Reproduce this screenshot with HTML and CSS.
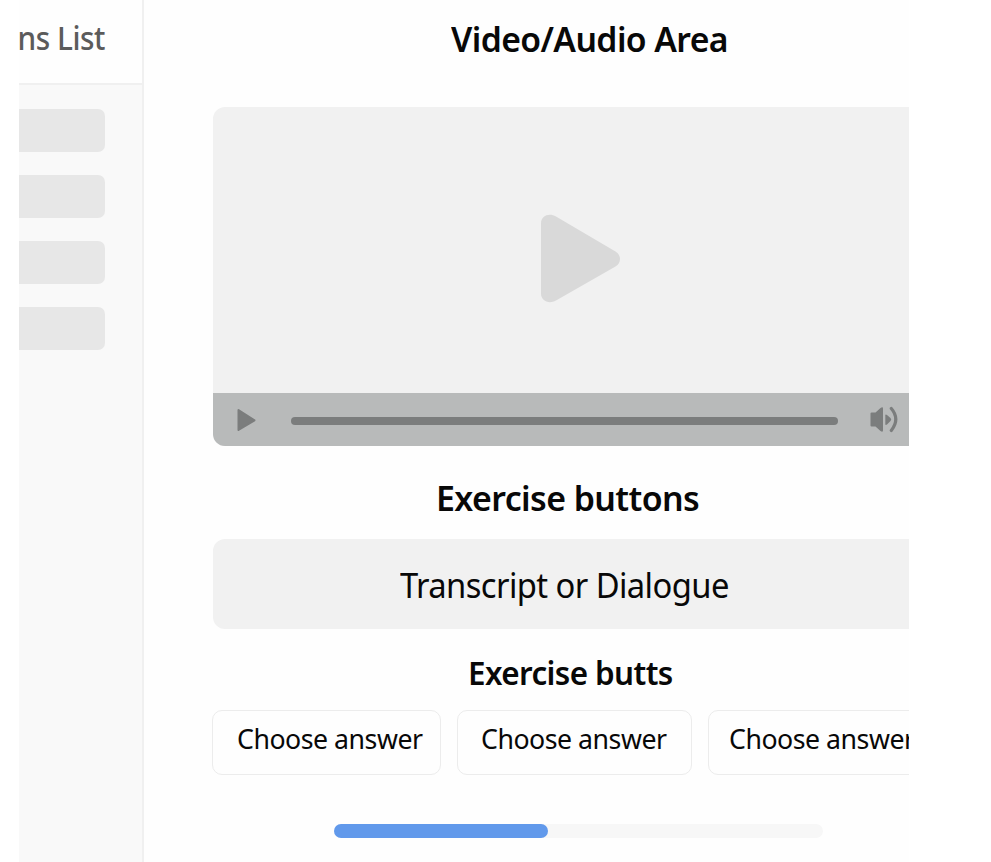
FILE: index.html
```html
<!DOCTYPE html>
<html lang="en">
<head>
<meta charset="utf-8">
<title>Lesson</title>
<link rel="stylesheet" href="styles.css">
</head>
<body>
<div class="frame">
  <aside class="sidebar">
    <div class="sidebar-header"><span class="sidebar-title">ns List</span></div>
    <div class="lessons">
      <div class="lesson"></div>
      <div class="lesson"></div>
      <div class="lesson"></div>
      <div class="lesson"></div>
    </div>
  </aside>
  <main class="main">
    <h1 class="heading heading-video"><span>Video/Audio Area</span></h1>
    <section class="player">
      <div class="screen">
        <svg class="big-play" width="80" height="90" viewBox="0 0 80 90"><path d="M0 9.500C0 2 8 -1.500 15 2.500L74.500 37.500C80.500 41 80.500 49 74.500 52.500L15 86.500C8 90.500 0 87 0 79.500Z" fill="#d9d9d9"/></svg>
      </div>
      <div class="controls">
        <svg class="play" width="20" height="24" viewBox="0 0 20 24"><path d="M1.500 2L17.500 12.300L1.500 22Z" fill="#7b7d7d" stroke="#7b7d7d" stroke-width="2" stroke-linejoin="round"/></svg>
        <div class="track"></div>
        <svg class="volume" width="28" height="28" viewBox="0 0 28 28" fill="#7b7d7d"><path d="M0.500 7.500Q0.500 6.500 1.500 6.500H5.500L10.500 2Q13 0.500 13 2.500V24.500Q13 26.500 10.500 25L5.500 20.500H1.500Q0.500 20.500 0.500 19.500Z"/><path d="M15.300 9.500Q15.300 8 17 9L20.500 12Q22 13.300 20.500 15L17 18.500Q15.300 19.500 15.300 18Z"/><path d="M21.300 2.500Q30.300 13 21.300 24.500" fill="none" stroke="#7b7d7d" stroke-width="3.200" stroke-linecap="round"/></svg>
      </div>
    </section>
    <h2 class="heading heading-exercise"><span>Exercise buttons</span></h2>
    <section class="transcript"><span>Transcript or Dialogue</span></section>
    <h2 class="heading heading-butts"><span>Exercise butts</span></h2>
    <div class="answers">
      <button class="answer answer-first"><span>Choose answer</span></button>
      <button class="answer answer-second"><span>Choose answer</span></button>
      <button class="answer answer-third"><span>Choose answer</span></button>
    </div>
    <div class="progress"><div class="progress-fill"></div></div>
  </main>
</div>
</body>
</html>
```
FILE: styles.css
```css
* { box-sizing: border-box; }
body { margin: 0; background: #fff; color: #080808; font-family: "Noto Sans", sans-serif; }
.frame { display: flex; width: 890px; height: 862px; margin-left: 19px; overflow: hidden; background: #fefefe; white-space: nowrap; }
.sidebar { flex: none; width: 125px; background: #f9f9f9; border-right: 2px solid #f0f0f0; }
.sidebar-header { display: flex; justify-content: flex-end; height: 85px; padding: 17px 37.500px 0 0; background: #fefefe; border-bottom: 2px solid #f0f0f0; }
.sidebar-title { font-size: 32px; font-weight: 500; line-height: 42px; color: #5b5b5b; letter-spacing: -0.5px; transform: scaleX(.93); transform-origin: right; }
.lessons { display: grid; gap: 23px; padding: 24.400px 37px 0 0; }
.lesson { height: 43px; border-radius: 0 7px 7px 0; background: #e7e7e7; }
.main { flex: 1; min-width: 0; padding-left: 68.500px; }
.heading { margin: 0; font-size: 34px; font-weight: 600; line-height: 46px; letter-spacing: -0.6px; }
.heading span, .transcript span, .answer span { display: inline-block; transform-origin: left; }
.heading-video { height: 106.500px; padding: 16px 0 0 238.500px; }
.heading-video span { transform: scaleX(.992); }
.player { height: 339.500px; border-radius: 12px 0 0 12px; overflow: hidden; background: #f1f1f1; }
.screen { height: 286.500px; padding: 107px 0 0 328.500px; }
.big-play, .play, .volume { display: block; flex: none; }
.controls { display: flex; align-items: center; height: 53px; padding-left: 24px; background: #b8baba; }
.track { flex: none; width: 547px; height: 8px; margin: 2px 32px 0 34px; border-radius: 4px; background: #7b7d7d; }
.heading-exercise { height: 92.500px; padding: 29px 0 0 223px; }
.heading-exercise span { transform: scaleX(.997); }
.transcript { height: 90px; padding: 23px 0 0 187px; border-radius: 12px 0 0 12px; background: #f1f1f1; font-size: 34px; line-height: 46px; letter-spacing: -0.6px; }
.transcript span { transform: scaleX(.963); }
.heading-butts { height: 81px; padding: 21px 0 0 255px; font-size: 32px; }
.heading-butts span { transform: scaleX(.98); }
.answers { display: flex; gap: 16px; margin-left: -0.500px; }
.answer { flex: none; height: 65px; padding: 0 0 8px; border: 1.500px solid #ececec; border-radius: 10px; background: #fefefe; color: inherit; font: 28px/38px "Noto Sans", sans-serif; letter-spacing: -0.5px; text-align: left; }
.answer span { transform: scaleX(.953); }
.answer-first { width: 229px; padding-left: 24px; }
.answer-second { width: 235px; padding-left: 23px; }
.answer-third { width: 235px; padding-left: 20px; }
.progress { width: 489px; height: 14px; margin: 49.500px 0 0 121.500px; border-radius: 7px; background: #f7f7f7; }
.progress-fill { width: 214px; height: 14px; border-radius: 7px; background: #6199eb; }
```
